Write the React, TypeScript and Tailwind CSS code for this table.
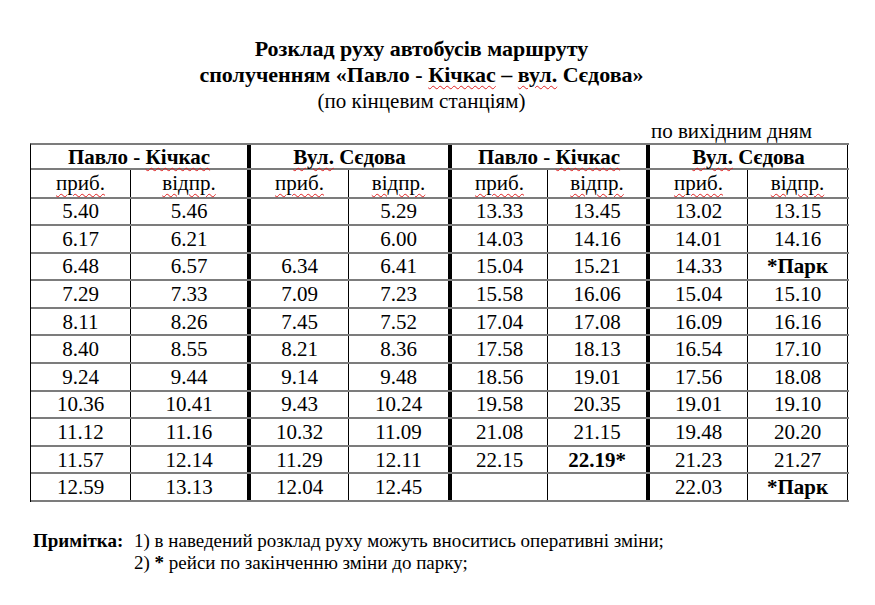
import React from "react";

type Cell = string | { t: string; b: true };

const cols = ["w-[100px]", "w-[120px]", "w-[98px]", "w-[103px]", "w-[96px]", "w-[102px]", "w-[98px]", "w-[100px]"];
const rightBorder = [
    "border-r border-black",
    "border-r-4 border-black",
    "border-r border-black",
    "border-r-4 border-black",
    "border-r border-black",
    "border-r-4 border-black",
    "border-r border-black",
    "border-r border-black",
];

const park: Cell = { t: "*Парк", b: true };

const rows: Cell[][] = [
    ["5.40", "5.46", "", "5.29", "13.33", "13.45", "13.02", "13.15"],
    ["6.17", "6.21", "", "6.00", "14.03", "14.16", "14.01", "14.16"],
    ["6.48", "6.57", "6.34", "6.41", "15.04", "15.21", "14.33", park],
    ["7.29", "7.33", "7.09", "7.23", "15.58", "16.06", "15.04", "15.10"],
    ["8.11", "8.26", "7.45", "7.52", "17.04", "17.08", "16.09", "16.16"],
    ["8.40", "8.55", "8.21", "8.36", "17.58", "18.13", "16.54", "17.10"],
    ["9.24", "9.44", "9.14", "9.48", "18.56", "19.01", "17.56", "18.08"],
    ["10.36", "10.41", "9.43", "10.24", "19.58", "20.35", "19.01", "19.10"],
    ["11.12", "11.16", "10.32", "11.09", "21.08", "21.15", "19.48", "20.20"],
    ["11.57", "12.14", "11.29", "12.11", "22.15", { t: "22.19*", b: true }, "21.23", "21.27"],
    ["12.59", "13.13", "12.04", "12.45", "", "", "22.03", park],
];

const Squiggle = ({ children }: { children: React.ReactNode }) => (
    <span className="underline decoration-wavy decoration-[#e02020] decoration-1 underline-offset-[3px]">{children}</span>
);

const stations = [
    { key: "pk1", label: <span>Павло - <Squiggle>Кічкас</Squiggle></span>, w: "w-[220px]", br: "border-r-4 border-black" },
    { key: "vs1", label: <span><Squiggle>Вул.</Squiggle> Сєдова</span>, w: "w-[201px]", br: "border-r-4 border-black" },
    { key: "pk2", label: <span>Павло - <Squiggle>Кічкас</Squiggle></span>, w: "w-[198px]", br: "border-r-4 border-black" },
    { key: "vs2", label: <span><Squiggle>Вул.</Squiggle> Сєдова</span>, w: "w-[198px]", br: "border-r border-black" },
];

export default function App() {
    return (
        <div className="font-serif w-[875px] h-[605px] bg-white text-black overflow-hidden">
            <div className="font-[Liberation_Serif] ml-[30px] w-[783px] pt-[36px] text-center">
                <h1 className="text-[22px] font-bold leading-[26px]">Розклад руху автобусів маршруту</h1>
                <h2 className="text-[22px] font-bold leading-[26px]">
                    сполученням «Павло - <Squiggle>Кічкас</Squiggle> – <Squiggle>вул.</Squiggle> Сєдова»
                </h2>
                <p className="text-[21px] leading-[26px]">(по кінцевим станціям)</p>
            </div>
            <p className="font-[Liberation_Serif] text-right w-[812px] mt-[5px] text-[21px] leading-[24px]">по вихідним дням</p>

            <div className="font-[Liberation_Serif] ml-[30px] w-[819px] border-l border-black border-t-2 border-t-[#7c7c7c]">
                <div className="flex h-[25px] border-b-2 border-[#7c7c7c] text-[21px] font-bold leading-[22px]">
                    {stations.map((s) => (
                        <div key={s.key} className={`${s.w} ${s.br} flex items-center justify-center`}>
                            {s.label}
                        </div>
                    ))}
                </div>
                <div className="flex h-[28.5px] border-b-2 border-[#7c7c7c] text-[21px] leading-[22px]">
                    {cols.map((w, i) => (
                        <div key={i} className={`${w} ${rightBorder[i]} flex items-center justify-center`}>
                            <Squiggle>{i % 2 === 0 ? "приб." : "відпр."}</Squiggle>
                        </div>
                    ))}
                </div>
                {rows.map((r, ri) => (
                    <div key={ri} className="flex h-[27.6px] border-b-2 border-[#7c7c7c] text-[21px] leading-[22px]">
                        {r.map((c, ci) => (
                            <div key={ci} className={`${cols[ci]} ${rightBorder[ci]} flex items-center justify-center`}>
                                {typeof c === "string" ? c : <span className="font-bold">{c.t}</span>}
                            </div>
                        ))}
                    </div>
                ))}
            </div>

            <div className="font-[Liberation_Serif] ml-[33px] mt-[28px] text-[19px] leading-[22px]">
                <p>
                    <b className="inline-block w-[101px]">Примітка:</b>1) в наведений розклад руху можуть вноситись оперативні зміни;
                </p>
                <p className="pl-[101px]">
                    2) <b>*</b> рейси по закінченню зміни до парку;
                </p>
            </div>
        </div>
    );
}
